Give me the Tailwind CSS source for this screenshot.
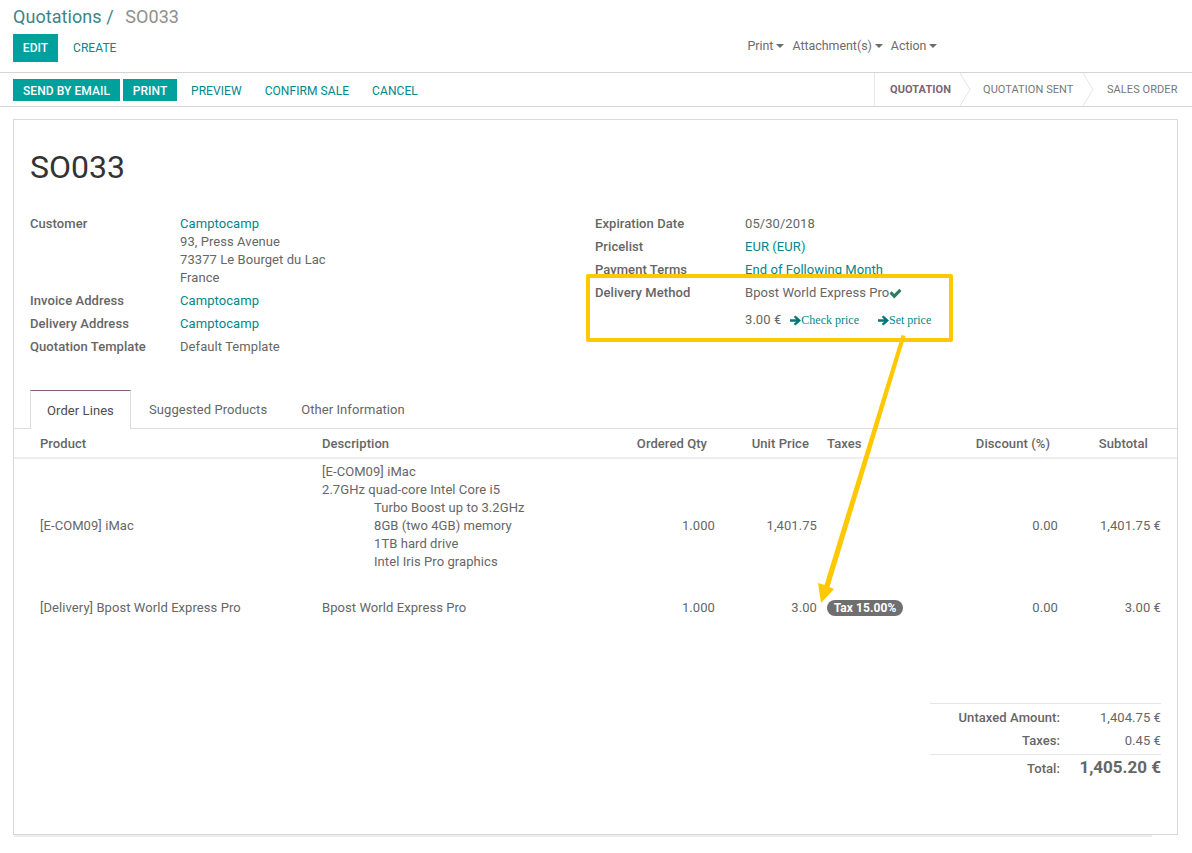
<!DOCTYPE html>
<html lang="en">
<head>
    <meta charset="UTF-8">
    <title>SO033 - Odoo</title>
    <script src="https://cdn.jsdelivr.net/npm/@tailwindcss/browser@4"></script>
</head>
<body class="relative bg-white text-[#666666] text-[13px] leading-[18px] tracking-[0.07px] font-['Roboto',sans-serif] w-[1192px] h-[853px] overflow-hidden">

    <!-- control panel -->
    <header class="h-[73px] border-b border-[#d4d4d4] px-[13px] pt-[6px]">
        <div class="text-[18px] leading-[22px] text-[#3b8587]">Quotations / <span class="ml-[7px] text-[#8f8f8f]">SO033</span></div>
        <div class="mt-[6px] flex items-center text-[12px]">
            <button class="h-[28px] w-[45px] bg-[#00a09d] text-white font-medium">EDIT</button>
            <button class="ml-[15px] text-[#00888a]">CREATE</button>
            <div class="ml-[631px] mb-[4px] flex items-center gap-[8px] text-[#6b6b6b] text-[12.4px] tracking-normal">
                <span class="flex items-center gap-[3px]">Print <i class="border-x-[4px] border-t-[4px] border-x-transparent border-t-[#6b6b6b]"></i></span>
                <span class="flex items-center gap-[3px]">Attachment(s) <i class="border-x-[4px] border-t-[4px] border-x-transparent border-t-[#6b6b6b]"></i></span>
                <span class="flex items-center gap-[3px]">Action <i class="border-x-[4px] border-t-[4px] border-x-transparent border-t-[#6b6b6b]"></i></span>
            </div>
        </div>
    </header>

    <!-- statusbar -->
    <div class="h-[34px] border-b border-[#d4d4d4] pl-[13px] flex items-center justify-between text-[12px]">
        <div class="flex items-center">
            <button class="h-[22px] w-[107px] pt-[2px] bg-[#00a09d] text-white font-medium">SEND BY EMAIL</button>
            <button class="ml-[3px] h-[22px] w-[54px] pt-[2px] bg-[#00a09d] text-white font-medium">PRINT</button>
            <button class="ml-[14px] pt-[2px] text-[#00888a]">PREVIEW</button>
            <button class="ml-[23px] pt-[2px] text-[#00888a]">CONFIRM SALE</button>
            <button class="ml-[23px] pt-[2px] text-[#00888a]">CANCEL</button>
        </div>
        <div class="h-full w-[318px] flex items-center border-l border-[#e8e8e8] text-[11px] whitespace-nowrap">
            <span class="w-[85px] pl-[15px] pt-[1px] font-bold text-[#7c6576]">QUOTATION</span>
            <svg class="h-full w-[11px]" viewBox="0 0 11 33" fill="none" stroke="#e5e5e5"><path d="M0 0l10 16.5L0 33"/></svg>
            <span class="w-[112px] pl-[12px] pt-[1px] text-[#777777]">QUOTATION SENT</span>
            <svg class="h-full w-[11px]" viewBox="0 0 11 33" fill="none" stroke="#e5e5e5"><path d="M0 0l10 16.5L0 33"/></svg>
            <span class="pl-[13px] pt-[1px] text-[#777777]">SALES ORDER</span>
        </div>
    </div>

    <!-- sheet -->
    <main class="mx-[13px] mt-[12px] w-[1165px] h-[716px] border border-[#d9d9d9]">
        <h1 class="ml-[16px] mt-[27px] h-[40px] text-[32px] leading-[40px] tracking-normal text-[#333333]">SO033</h1>

        <div class="mt-[28px] ml-[16px] flex">
            <div class="w-[565px]">
                <div class="flex"><b class="w-[150px] font-medium">Customer</b><div><span class="text-[#00888a]">Camptocamp</span><br>93, Press Avenue<br>73377 Le Bourget du Lac<br>France</div></div>
                <div class="flex mt-[5px]"><b class="w-[150px] font-medium">Invoice Address</b><span class="text-[#00888a]">Camptocamp</span></div>
                <div class="flex mt-[5px]"><b class="w-[150px] font-medium">Delivery Address</b><span class="text-[#00888a]">Camptocamp</span></div>
                <div class="flex mt-[5px]"><b class="w-[150px] font-medium">Quotation Template</b><span>Default Template</span></div>
            </div>
            <div>
                <div class="flex"><b class="w-[150px] font-medium">Expiration Date</b><span>05/30/2018</span></div>
                <div class="flex mt-[5px]"><b class="w-[150px] font-medium">Pricelist</b><span class="text-[#00888a]">EUR (EUR)</span></div>
                <div class="flex mt-[5px]"><b class="w-[150px] font-medium">Payment Terms</b><span class="text-[#00888a]">End of Following Month</span></div>
                <div class="flex mt-[5px]"><b class="w-[150px] font-medium">Delivery Method</b>
                    <div>
                        <div class="flex items-center">Bpost World Express Pro
                            <svg class="w-[13px] h-[11px]" viewBox="0 0 13 11" fill="#2e7d5b"><path d="M.5 5.5l2.2-2.2 2.6 2.6L10.3.8l2.2 2.2-7.2 7.4z"/></svg>
                        </div>
                        <div class="mt-[9px] flex items-center">3.00 €
                            <span class="ml-[9px] flex items-center font-['Liberation_Serif',serif] text-[12px] tracking-normal text-[#00888a]">
                                <svg class="w-[11px] h-[11px]" viewBox="0 0 11 11" fill="#00777a"><path d="M5.4.5L11 5.5 5.4 10.5 3.8 9l2.4-2.2H0V4.2h6.2L3.8 2z"/></svg>Check price
                            </span>
                            <span class="ml-[19px] flex items-center font-['Liberation_Serif',serif] text-[12px] tracking-normal text-[#00888a]">
                                <svg class="w-[11px] h-[11px]" viewBox="0 0 11 11" fill="#00777a"><path d="M5.4.5L11 5.5 5.4 10.5 3.8 9l2.4-2.2H0V4.2h6.2L3.8 2z"/></svg>Set price
                            </span>
                        </div>
                    </div>
                </div>
            </div>
        </div>

        <!-- tabs -->
        <nav class="mt-[34px] h-[39px] border-b border-[#dddddd] pl-[16px] flex items-start">
            <span class="h-[39px] w-[101px] bg-white border-x border-t border-x-[#dddddd] border-t-[#875a7b] text-center leading-[40px] text-[#4c4c4c]">Order Lines</span>
            <span class="ml-[18px] mt-[11px]">Suggested Products</span>
            <span class="ml-[34px] mt-[11px]">Other Information</span>
        </nav>

        <table class="table-fixed w-[1163px] border-collapse">
            <colgroup>
                <col class="w-[298px]"><col class="w-[288px]"><col class="w-[125px]"><col class="w-[102px]"><col class="w-[123px]"><col class="w-[118px]"><col class="w-[109px]">
            </colgroup>
            <thead>
                <tr class="h-[29px] border-b-2 border-[#eeeeee] font-medium">
                    <th class="pl-[26px] pt-[1px] text-left font-medium">Product</th>
                    <th class="pl-[10px] pt-[1px] text-left font-medium">Description</th>
                    <th class="pr-[18px] pt-[1px] text-right font-medium">Ordered Qty</th>
                    <th class="pr-[18px] pt-[1px] text-right font-medium">Unit Price</th>
                    <th class="pt-[1px] text-left font-medium">Taxes</th>
                    <th class="pr-[18px] pt-[1px] text-right font-medium">Discount (%)</th>
                    <th class="pr-[29px] pt-[1px] text-right font-medium">Subtotal</th>
                </tr>
            </thead>
            <tbody>
                <tr class="h-[134px]">
                    <td class="pl-[26px]">[E-COM09] iMac</td>
                    <td class="pl-[10px] pt-[4px] align-top">[E-COM09] iMac<br>2.7GHz quad-core Intel Core i5
                        <div class="pl-[52px]">Turbo Boost up to 3.2GHz<br>8GB (two 4GB) memory<br>1TB hard drive<br>Intel Iris Pro graphics</div>
                    </td>
                    <td class="pr-[10px] text-right">1.000</td>
                    <td class="pr-[10px] text-right">1,401.75</td>
                    <td></td>
                    <td class="pr-[10px] text-right">0.00</td>
                    <td class="pr-[16px] text-right">1,401.75 €</td>
                </tr>
                <tr class="h-[31px]">
                    <td class="pl-[26px]">[Delivery] Bpost World Express Pro</td>
                    <td class="pl-[10px]">Bpost World Express Pro</td>
                    <td class="pr-[10px] text-right">1.000</td>
                    <td class="pr-[10px] text-right">3.00</td>
                    <td><span class="inline-block h-[16px] w-[76px] rounded-full bg-[#6f6f6f] text-center text-[12px] leading-[16px] font-bold text-white">Tax 15.00%</span></td>
                    <td class="pr-[10px] text-right">0.00</td>
                    <td class="pr-[16px] text-right">3.00 €</td>
                </tr>
            </tbody>
        </table>

        <!-- totals -->
        <div class="ml-[916px] mt-[80px] w-[231px] border-t border-[#e6e6e6]">
            <div class="h-[24px] flex items-end justify-between pb-[1px]"><b class="w-[130px] text-right font-medium">Untaxed Amount:</b><span>1,404.75 €</span></div>
            <div class="h-[23px] flex items-end justify-between pb-[1px]"><b class="w-[130px] text-right font-medium">Taxes:</b><span>0.45 €</span></div>
            <div class="mt-[3px] border-t border-[#e6e6e6] h-[24px] flex items-end justify-between"><b class="w-[130px] text-right font-medium">Total:</b><span class="text-[17px] leading-[22px] tracking-normal font-bold">1,405.20 €</span></div>
        </div>
    </main>
    <div class="ml-[14px] w-[1138px] h-[2px] bg-[#ececec]"></div>

    <!-- annotation -->
    <div class="absolute left-[586px] top-[274px] w-[367px] h-[68px] border-[4px] border-[#ffc800] rounded-[2px]"></div>
    <svg class="absolute left-[810px] top-[330px]" width="100" height="280" viewBox="0 0 100 280" fill="#ffc800">
        <path d="M91.5 5L95.5 6L19.5 257L24 259L11 273L8 253L14.5 255z"/>
    </svg>
</body>
</html>
